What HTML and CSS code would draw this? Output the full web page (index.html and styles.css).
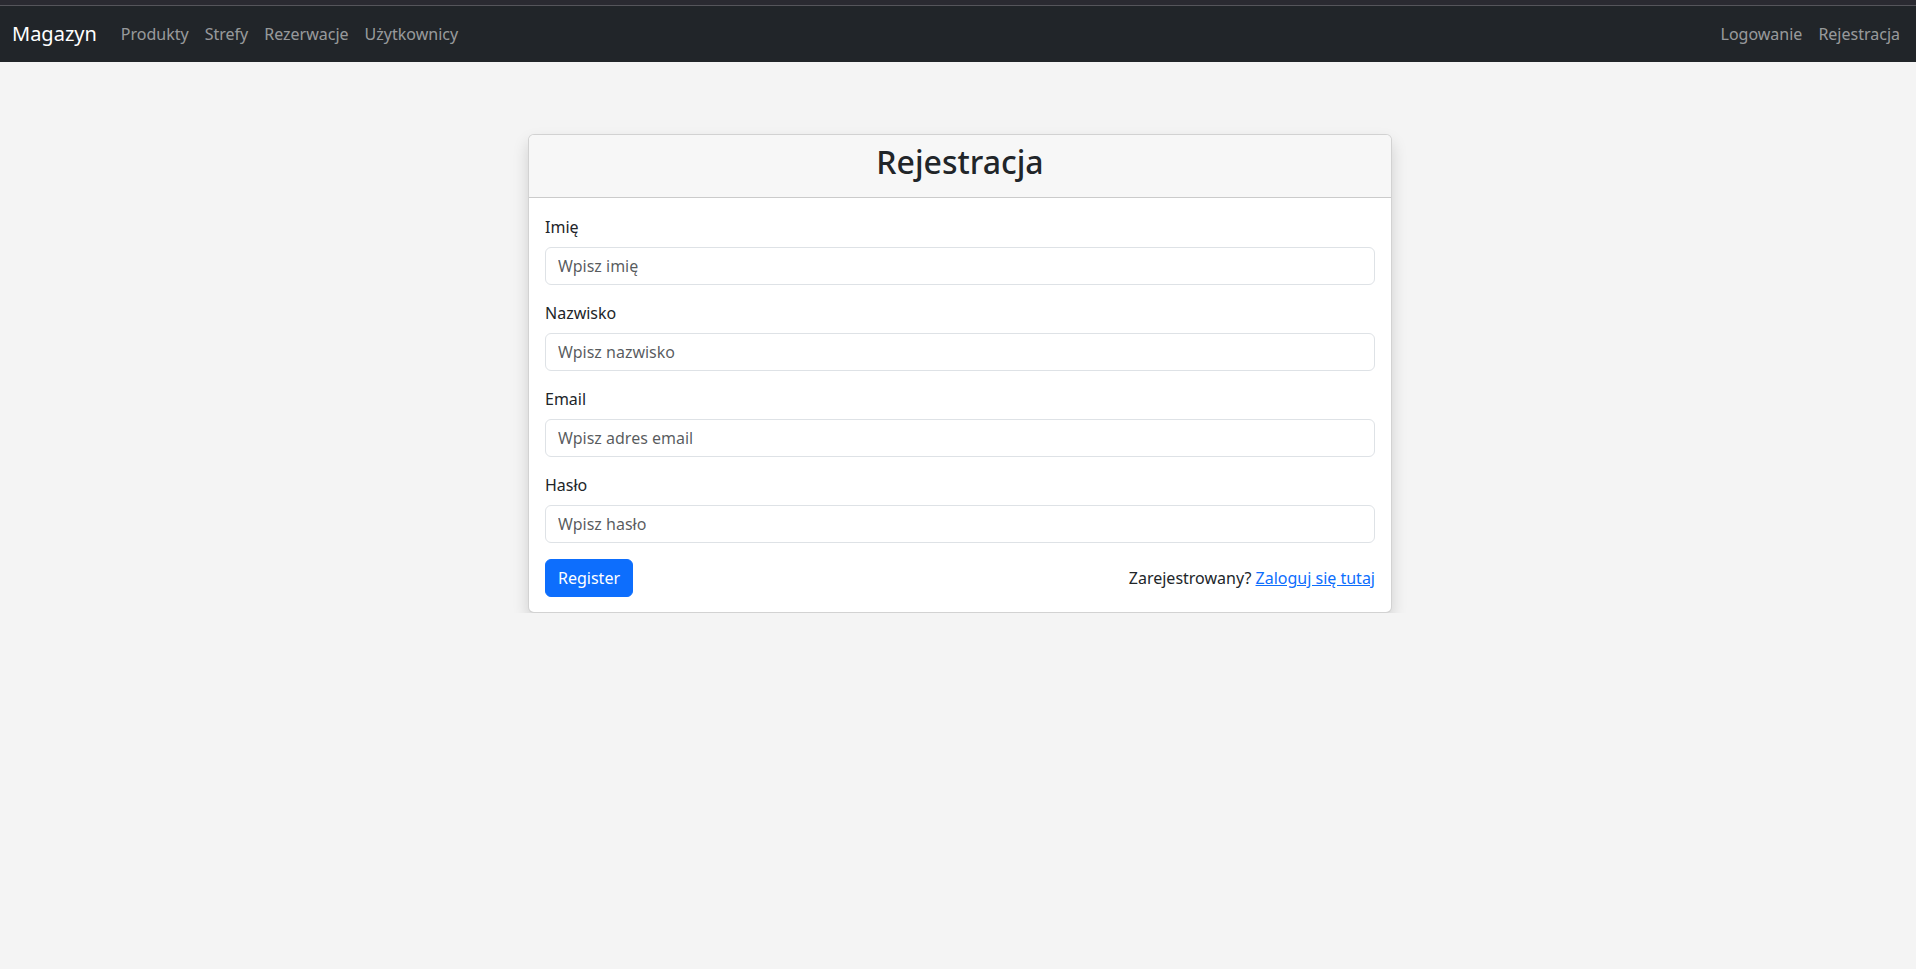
FILE: index.html
```html
<!DOCTYPE html>
<html lang="pl">
<head>
<meta charset="utf-8">
<title>Rejestracja</title>
<link rel="stylesheet" href="styles.css">
</head>
<body>
<div class="topstrip"></div>
<nav class="navbar">
  <div class="nav-left">
    <a class="brand" href="#">Magazyn</a>
    <ul class="nav">
      <li><a class="nav-link" href="#">Produkty</a></li>
      <li><a class="nav-link" href="#">Strefy</a></li>
      <li><a class="nav-link" href="#">Rezerwacje</a></li>
      <li><a class="nav-link" href="#">Użytkownicy</a></li>
    </ul>
  </div>
  <ul class="nav">
    <li><a class="nav-link" href="#">Logowanie</a></li>
    <li><a class="nav-link" href="#">Rejestracja</a></li>
  </ul>
</nav>
<main class="main">
  <div class="card">
    <div class="card-header">
      <h2 class="title">Rejestracja</h2>
    </div>
    <form class="card-body">
      <div class="group">
        <label class="label">Imię</label>
        <input class="input" type="text" placeholder="Wpisz imię">
      </div>
      <div class="group">
        <label class="label">Nazwisko</label>
        <input class="input" type="text" placeholder="Wpisz nazwisko">
      </div>
      <div class="group">
        <label class="label">Email</label>
        <input class="input" type="email" placeholder="Wpisz adres email">
      </div>
      <div class="group">
        <label class="label">Hasło</label>
        <input class="input" type="password" placeholder="Wpisz hasło">
      </div>
      <div class="actions">
        <button class="btn" type="button">Register</button>
        <span class="login-text">Zarejestrowany? <a class="link" href="#">Zaloguj się tutaj</a></span>
      </div>
    </form>
  </div>
</main>
</body>
</html>
```
FILE: styles.css
```css
* { box-sizing: border-box; }
html, body { margin: 0; padding: 0; }
body {
  font-family: "Noto Sans", "Liberation Sans", sans-serif;
  font-size: 16px;
  line-height: 1.5;
  color: #212529;
  background: #f4f4f4;
}
.topstrip {
  height: 6px;
  background: #2a2a31;
  border-bottom: 1px solid #55555b;
}
.navbar {
  height: 56px;
  background: #212529;
  display: flex;
  align-items: center;
  justify-content: space-between;
  padding: 8px 8px 8px 12px;
}
.nav-left { display: flex; align-items: center; }
.brand {
  color: #fff;
  text-decoration: none;
  font-size: 20px;
  line-height: 30px;
  margin-right: 16px;
}
.nav {
  list-style: none;
  margin: 0;
  padding: 0;
  display: flex;
}
.nav-link {
  display: block;
  padding: 8px;
  color: rgba(255,255,255,0.55);
  text-decoration: none;
  font-size: 16px;
  line-height: 24px;
}
.main {
  display: flex;
  justify-content: center;
  padding-top: 72px;
  padding-left: 4px;
}
.card {
  width: 864px;
  background: #fff;
  border: 1px solid rgba(0,0,0,0.175);
  border-radius: 6px;
  box-shadow: 0 8px 16px rgba(0,0,0,0.15);
}
.card-header {
  background: #f7f7f7;
  border-bottom: 1px solid rgba(0,0,0,0.175);
  border-radius: 5px 5px 0 0;
  padding: 8px 16px;
  text-align: center;
}
.title {
  margin: 0 0 8px;
  font-size: 32px;
  line-height: 1.2;
  font-weight: 500;
}
.card-body { padding: 17px 16px 15px; margin: 0; }
.group { margin-bottom: 16px; }
.label {
  display: block;
  margin-bottom: 8px;
  line-height: 24px;
}
.input {
  display: block;
  width: 100%;
  height: 38px;
  padding: 6px 12px;
  font-family: inherit;
  font-size: 16px;
  line-height: 24px;
  color: #212529;
  background: #fff;
  border: 1px solid #dee2e6;
  border-radius: 6px;
}
.input::placeholder { color: rgba(33,37,41,0.75); }
.actions {
  display: flex;
  justify-content: space-between;
  align-items: center;
}
.btn {
  height: 38px;
  padding: 6px 12px;
  font-family: inherit;
  font-size: 16px;
  line-height: 24px;
  color: #fff;
  background: #0d6efd;
  border: 1px solid #0d6efd;
  border-radius: 6px;
}
.link { color: #0d6efd; text-decoration: underline; }
```
